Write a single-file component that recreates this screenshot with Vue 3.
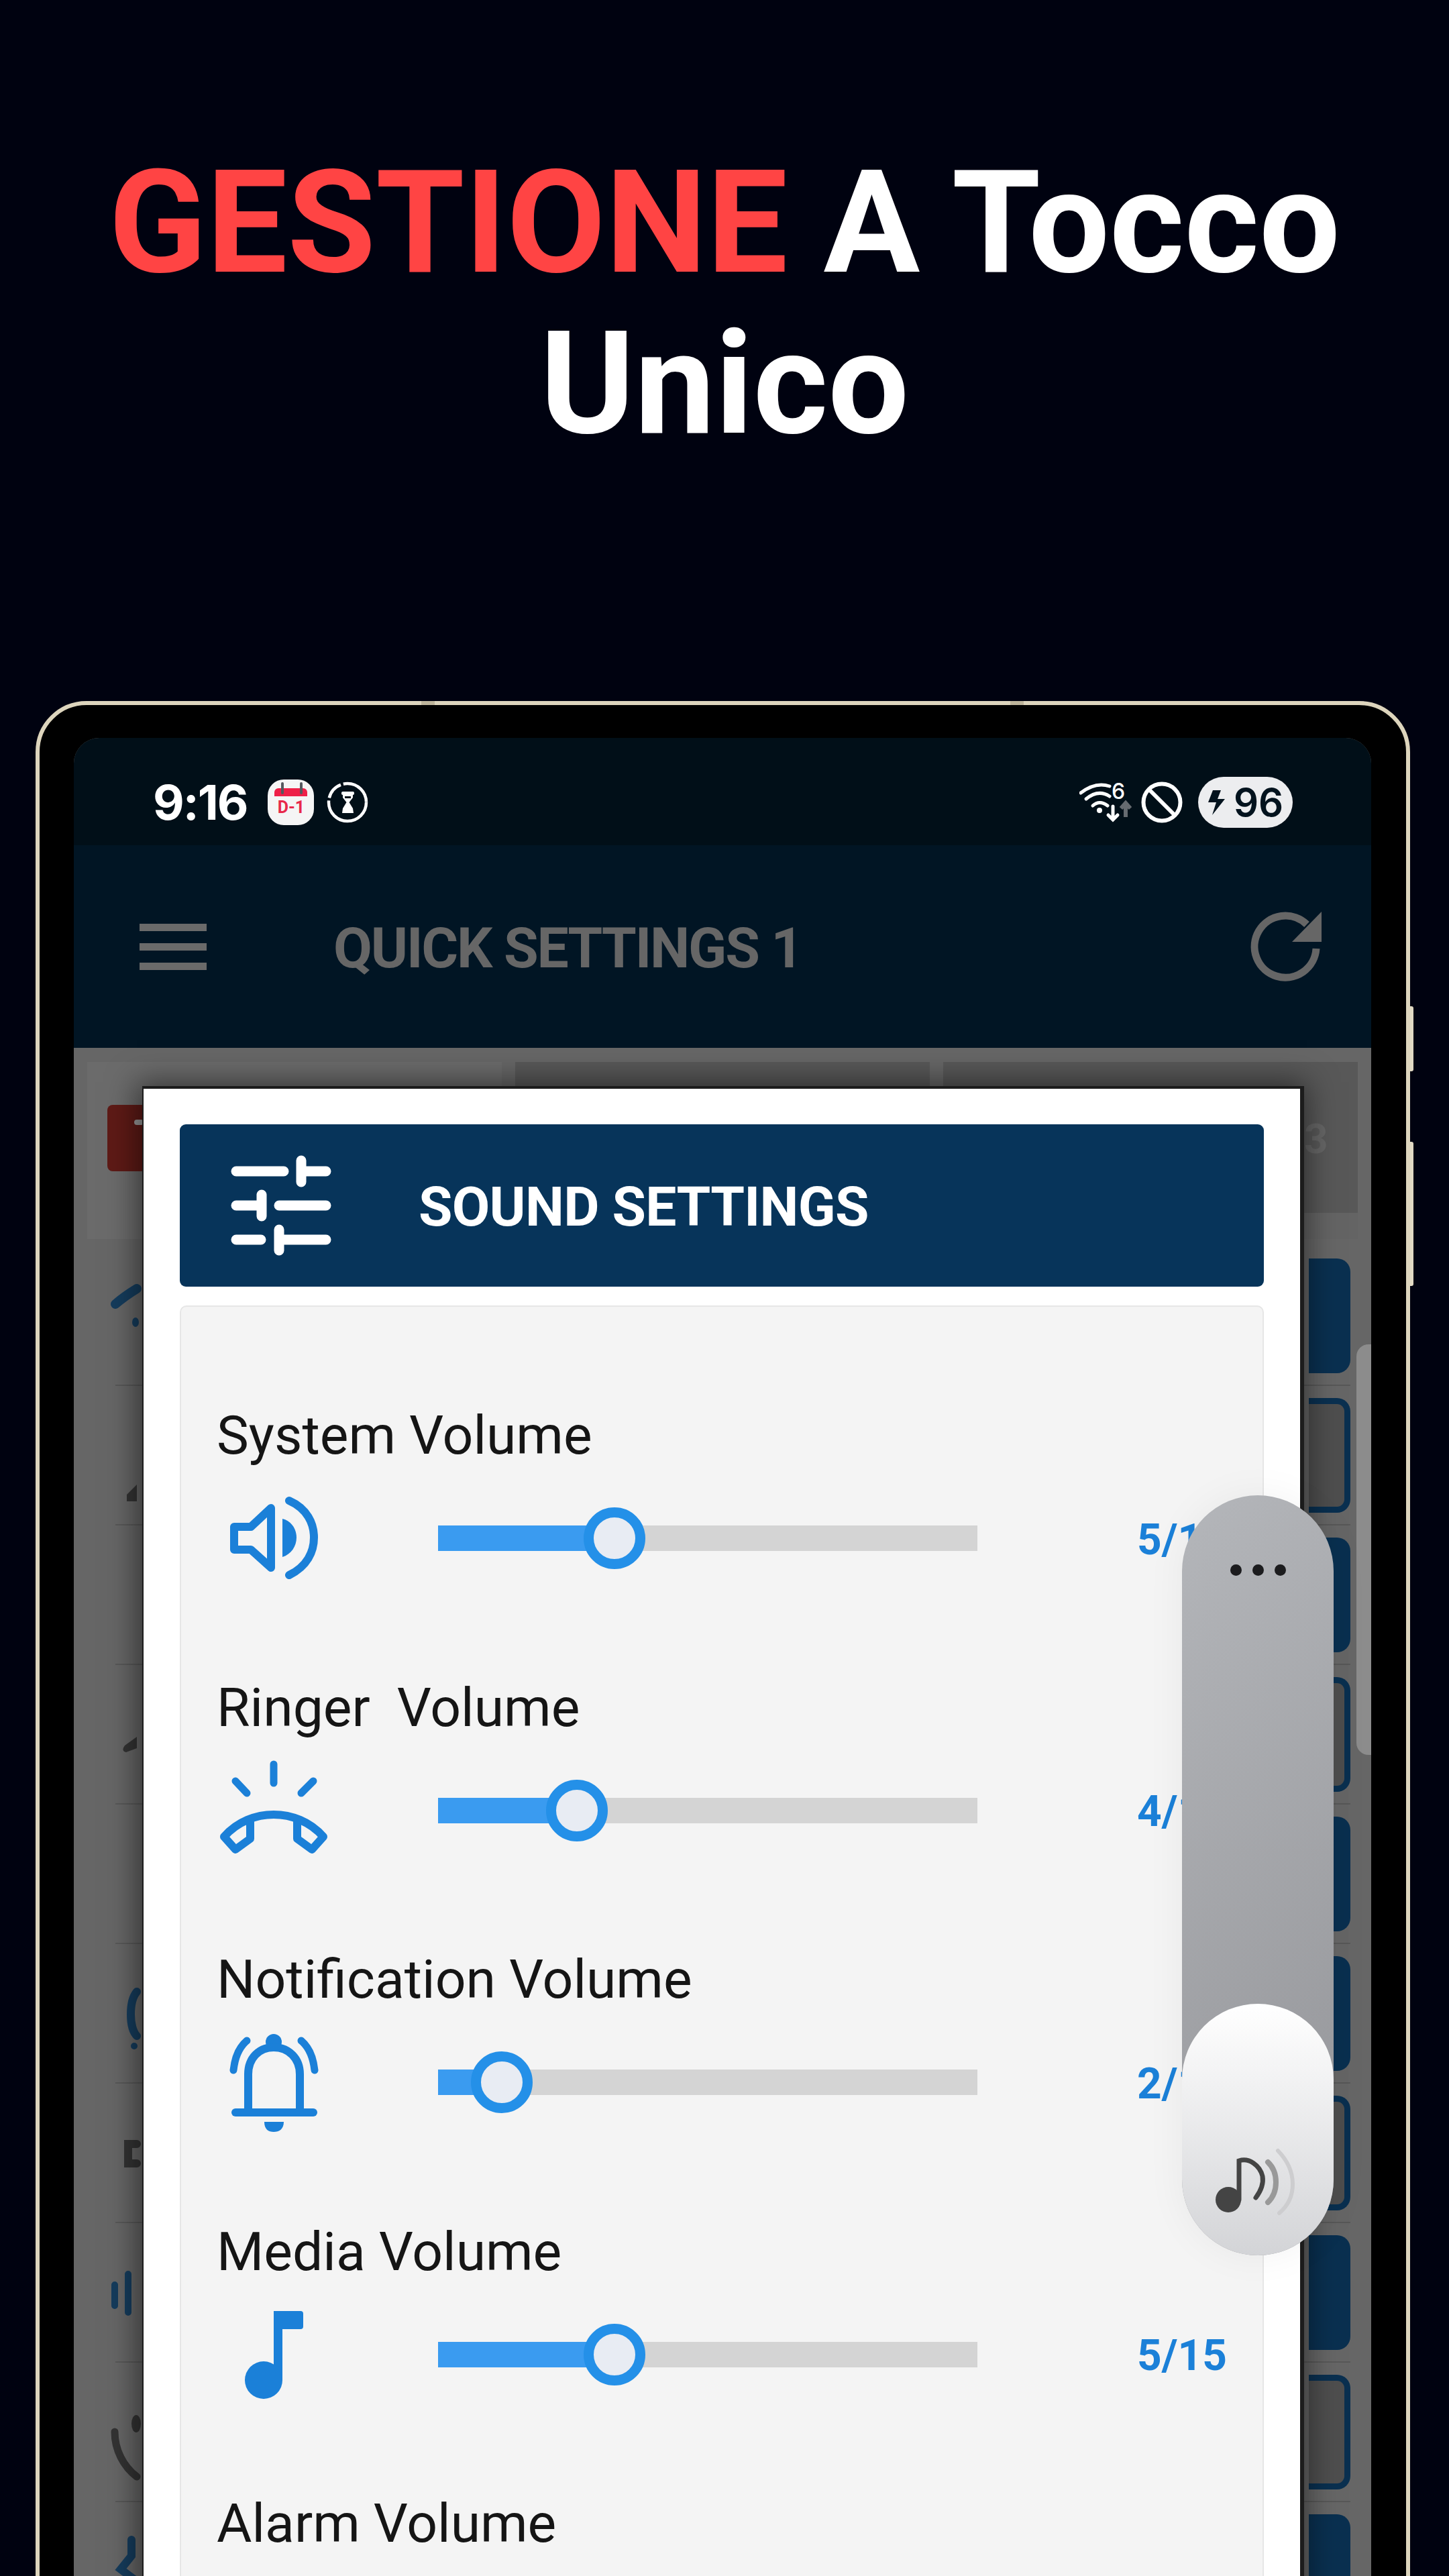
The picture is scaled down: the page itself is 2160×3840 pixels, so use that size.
<template>
  <div class="page">
    <h1 class="headline"><span class="red">GESTIONE</span> A Tocco<br />Unico</h1>

    <div class="device">
      <i class="side-btn one"></i>
      <i class="side-btn two"></i>
      <i class="seam top-a"></i>
      <i class="seam top-b"></i>

      <div class="screen">
        <div class="status-bar">
          <span class="clock">9:16</span>
          <svg class="calendar" viewBox="0 0 69 68">
            <rect x="0" y="0" width="69" height="68" rx="24" fill="#f5f5f5" />
            <path d="M10 19a6 6 0 0 1 6-6h37a6 6 0 0 1 6 6v6H10z" fill="#ee2048" />
            <path d="M22 6v14M50 6v14" stroke="#55585e" stroke-width="4" stroke-linecap="round" />
            <text x="35" y="50" text-anchor="middle" class="cal-text">D-1</text>
          </svg>
          <svg class="timer" viewBox="0 0 64 66">
            <circle cx="32" cy="33" r="28" fill="none" stroke="#fff" stroke-width="4.500" stroke-dasharray="90.500 4 27 4 50" />
            <rect x="23" y="17" width="19" height="5" rx="2" fill="#fff" />
            <path d="M25 21h15v5l-5.500 7 5.500 9 1 7H24l1-7 5.500-9-5.500-7z" fill="#fff" />
            <rect x="28" y="24" width="9" height="3" fill="#010f18" />
          </svg>

          <div class="status-right">
            <svg class="wifi" viewBox="0 -12 80 88">
              <g fill="none" stroke="#fff" stroke-width="5" stroke-linecap="round">
                <path d="M20 37q10-9 22 0" />
                <path d="M10 27q18-15 35-4" />
                <path d="M2 18q22-17 43-10" />
                <path d="M50 38v19M43 51l7 7 7-7" />
              </g>
              <path d="M69 54V34M62 41l7-8 7 8" fill="none" stroke="#666b70" stroke-width="6" />
              <circle cx="30" cy="44" r="4" fill="#fff" />
              <text x="48" y="27" class="wifi-six">6</text>
            </svg>
            <svg class="ban" viewBox="0 0 62 62">
              <circle cx="31" cy="31" r="27.500" fill="none" stroke="#fff" stroke-width="6" />
              <path d="M12 12l38 38" stroke="#fff" stroke-width="6" />
            </svg>
            <div class="battery">
              <svg class="bolt" viewBox="0 0 27 37"><path d="M8 0h12l-5 13h11L7 37l6-19H1z" fill="#03131e" /></svg>
              <span>96</span>
            </div>
          </div>
        </div>

        <div class="app-bar">
          <div class="burger"><i></i><i></i><i></i></div>
          <span class="app-title">QUICK SETTINGS 1</span>
          <svg class="refresh" viewBox="0 0 115 115">
            <path d="M88 24A46 46 0 1 0 102 60" fill="none" stroke="#666" stroke-width="11" />
            <path d="M110 5v45H66z" fill="#666" />
          </svg>
        </div>

        <div class="content">
          <div class="tiles">
            <div class="tile first">
              <div class="red-box"><i></i></div>
            </div>
            <div class="tile dark"></div>
            <div class="tile dark"><span class="tile-num">3</span></div>
          </div>

          <div class="list">
            <div v-for="(row, i) in listRows" :key="i" class="list-row">
              <svg class="row-icon" viewBox="0 0 40 206" v-html="row.icon"></svg>
              <div class="row-card" :class="{ outline: row.outline }"></div>
            </div>
          </div>
        </div>

        <div class="scrollbar"></div>

        <div class="dialog">
          <div class="dialog-head">
            <svg class="tune" viewBox="0 0 150 150" fill="none" stroke="#fff" stroke-width="15" stroke-linecap="round">
              <path d="M8 24h71M105 24h37M105 8v32" />
              <path d="M8 75h38M72 75h70M46 59v32" />
              <path d="M8 126h37M72 126h70M72 111v31" />
            </svg>
            <span class="head-title">SOUND SETTINGS</span>
          </div>

          <div class="volumes">
            <div v-for="v in volumes" :key="v.label" class="volume">
              <div class="volume-label">{{ v.label }}</div>
              <div v-if="v.icon" class="volume-row">
                <svg class="volume-icon" viewBox="0 0 170 160" v-html="v.icon"></svg>
                <div class="track">
                  <div class="fill" :style="{ width: thumbAt(v.value) + 'px' }"></div>
                  <div class="thumb" :style="{ left: thumbAt(v.value) + 'px' }"></div>
                </div>
                <span class="volume-value">{{ v.value }}/15</span>
              </div>
            </div>
          </div>
        </div>

        <div class="float-panel">
          <div class="dots"><i></i><i></i><i></i></div>
          <div class="knob">
            <svg class="knob-icon" viewBox="0 0 140 110">
              <circle cx="31" cy="83" r="19" fill="#444" />
              <path d="M47 83V25c15-5 31 7 35 23 2 12-4 24-10 32" fill="none" stroke="#444" stroke-width="7" stroke-linecap="round" />
              <path d="M90 27c16 15 16 45 0 60" fill="none" stroke="#999" stroke-width="8" stroke-linecap="round" />
              <path d="M105 10c29 30 29 70 2 93" fill="none" stroke="#cdcdcf" stroke-width="6" stroke-linecap="round" />
            </svg>
          </div>
        </div>
      </div>
    </div>
  </div>
</template>

<script setup>
const thumbAt = (value) => value * 56 - 17;

const blue = 'stroke="#153c5c" fill="none" stroke-linecap="round"';
const dark = 'stroke="#333" fill="none" stroke-linecap="round"';

// what sticks out left of the dialog, row by row
const listRows = [
  { icon: `<path d="M0 86Q14 74 32 63" stroke-width="14" ${blue}/><ellipse cx="30" cy="113" rx="5" ry="7" fill="#153c5c"/>` },
  { outline: true, icon: `<path d="M32 147L17 162V172H32Z" fill="#333"/>` },
  { icon: "" },
  { outline: true, icon: `<path d="M32 107L14 120Q8 128 16 130L32 124Z" fill="#333"/>` },
  { icon: "" },
  { icon: `<path d="M32 71C20 85 20 125 32 137" stroke-width="12" ${blue}/><circle cx="28" cy="152" r="5" fill="#153c5c"/>` },
  { outline: true, icon: `<path d="M32 90H19V119H32" stroke-width="12" ${dark}/>` },
  { icon: `<path d="M-1 92V123M19 76V133" stroke-width="10" ${blue}/>` },
  { outline: true, icon: `<path d="M-1 103C-1 130 12 155 32 170" stroke-width="11" ${dark}/><ellipse cx="31" cy="91" rx="7" ry="13" fill="#333"/>` },
  { icon: `<path d="M24 56V80L8 100L32 118" stroke-width="12" ${blue}/>` },
];

const iconStroke = 'fill="none" stroke="#1b80d8" stroke-linecap="round" stroke-linejoin="round"';

const volumes = [
  {
    label: "System Volume",
    value: 5,
    icon: `<path d="M29 63H54L84 35V124L54 97H29Z" stroke-width="12" ${iconStroke}/>
      <path d="M101 51C114 54 122 66 122 79C122 92 114 104 101 108Z" fill="#1b80d8"/>
      <path d="M111 24C138 36 148 58 148 79C148 100 138 122 111 135" stroke-width="12" ${iconStroke}/>`,
  },
  {
    label: "Ringer  Volume",
    value: 4,
    icon: `<path d="M88 11V39M31 36L48 54M147 36L129 54" stroke-width="11" ${iconStroke}/>
      <path d="M14 119C34 96 62 86 88 86C114 86 142 96 162 119L145 138L123 122V95M53 95V122L31 138L14 119" stroke-width="12" ${iconStroke}/>`,
  },
  {
    label: "Notification Volume",
    value: 2,
    icon: `<circle cx="88" cy="20" r="12" fill="#1b80d8"/>
      <path d="M50 121V68C50 44 66 28 88 28C110 28 127 44 127 68V121" stroke-width="12" ${iconStroke}/>
      <path d="M31 125H147" stroke-width="12" ${iconStroke}/>
      <path d="M74 139H103C103 150 96 154 88 154C80 154 74 150 74 139Z" fill="#1b80d8"/>
      <path d="M48 18C36 28 30 44 28 62M129 18C141 28 147 44 149 62" stroke-width="11" ${iconStroke}/>`,
  },
  {
    label: "Media Volume",
    value: 5,
    icon: `<circle cx="73" cy="118" r="28" fill="#1b80d8"/>
      <rect x="88" y="15" width="13" height="103" fill="#1b80d8"/>
      <rect x="88" y="15" width="44" height="27" rx="4" fill="#1b80d8"/>`,
  },
  { label: "Alarm Volume", value: 5, icon: "" },
];
</script>

<style>
html,
body {
  margin: 0;
  background: #000210;
}
</style>

<style scoped>
.page {
  position: relative;
  width: 2160px;
  height: 3840px;
  overflow: hidden;
  background: #000210;
  font-family: Roboto, "Liberation Sans", sans-serif;
}

.headline {
  margin: 0;
  padding-top: 212px;
  font-size: 214px;
  line-height: 240px;
  font-weight: 700;
  text-align: center;
  color: #fff;
}

.red {
  color: #ff4444;
}

.device {
  position: relative;
  box-sizing: border-box;
  width: 2049px;
  height: 2900px;
  margin: 353px 0 0 53px;
  padding: 49px 52px 0 51px;
  border: 6px solid #ddd5bd;
  border-radius: 76px;
  background: #000;
}

.side-btn {
  position: absolute;
  right: -11px;
  width: 5px;
  background: #e2dac4;
  border-radius: 0 3px 3px 0;
}

.side-btn.one {
  top: 449px;
  height: 97px;
}

.side-btn.two {
  top: 651px;
  height: 215px;
}

.seam {
  position: absolute;
  top: -6px;
  width: 20px;
  height: 6px;
  background: #bdb49b;
}

.seam.top-a {
  left: 569px;
}

.seam.top-b {
  left: 1447px;
}

.screen {
  position: relative;
  height: 2900px;
  overflow: hidden;
  border-radius: 38px 38px 0 0;
  background: #666;
}

.status-bar {
  display: flex;
  align-items: center;
  box-sizing: border-box;
  height: 160px;
  padding: 32px 117px 0 118px;
  background: #010f18;
  color: #fff;
}

.clock {
  font-family: Inter, sans-serif;
  font-size: 72px;
  font-weight: 700;
  letter-spacing: -2px;
  line-height: 1;
}

.calendar {
  width: 69px;
  height: 68px;
  margin-left: 30px;
}

.cal-text {
  font-family: Roboto, sans-serif;
  font-size: 25px;
  font-weight: 700;
  fill: #e8284a;
}

.timer {
  width: 64px;
  height: 66px;
  margin-left: 18px;
}

.status-right {
  display: flex;
  align-items: center;
  margin-left: auto;
}

.wifi {
  width: 80px;
  height: 88px;
  margin: 0;
}

.wifi-six {
  font-family: Inter, sans-serif;
  font-size: 32px;
  font-weight: 500;
  fill: #fff;
}

.ban {
  width: 62px;
  height: 62px;
  margin-left: 12px;
}

.battery {
  display: flex;
  align-items: center;
  box-sizing: border-box;
  width: 141px;
  height: 76px;
  margin-left: 23px;
  padding-left: 14px;
  border-radius: 38px;
  background: #ecedef;
  color: #03131e;
  font-family: Inter, sans-serif;
  font-size: 58px;
  font-weight: 600;
}

.bolt {
  width: 27px;
  height: 37px;
  margin-right: 12px;
}

.app-bar {
  display: flex;
  align-items: center;
  height: 302px;
  padding: 0 69px 0 98px;
  background: #011524;
}

.burger {
  display: flex;
  flex-direction: column;
  gap: 18px;
  width: 100px;
}

.burger i {
  display: block;
  height: 11px;
  background: #6a6a6a;
}

.app-title {
  margin: 4px 0 0 189px;
  color: #666;
  font-size: 84px;
  font-weight: 700;
  letter-spacing: -2.200px;
}

.refresh {
  width: 115px;
  height: 115px;
  margin-left: auto;
}

.content {
  padding: 21px 20px 0 20px;
}

.tiles {
  display: flex;
  gap: 20px;
  height: 264px;
}

.tile {
  position: relative;
  width: 620px;
}

.tile.first {
  background: #6b6b6b;
}

.tile.dark {
  background: linear-gradient(#585858 225px, #646464 225px);
}

.red-box {
  position: absolute;
  top: 64px;
  left: 30px;
  width: 120px;
  height: 99px;
  border-radius: 8px;
  background: #5e1a16;
}

.red-box i {
  position: absolute;
  top: 22px;
  left: 40px;
  width: 14px;
  height: 8px;
  border-radius: 4px;
  background: #999;
}

.tile-num {
  position: absolute;
  top: 78px;
  left: 538px;
  color: #666;
  font-size: 62px;
  font-weight: 700;
}

.list {
  margin: 11px 11px 0 42px;
}

.list-row {
  display: flex;
  align-items: center;
  justify-content: space-between;
  box-sizing: border-box;
  height: 208px;
  border-bottom: 2px solid #585858;
}

.row-icon {
  width: 40px;
  height: 206px;
  overflow: visible;
}

.row-card {
  box-sizing: border-box;
  width: 62px;
  height: 171px;
  border-radius: 0 20px 20px 0;
  background: #0a3050;
}

.row-card.outline {
  border: 9px solid #0a3050;
  border-left: 0;
  background: #4e4e4e;
}

.scrollbar {
  position: absolute;
  top: 904px;
  right: 0;
  width: 22px;
  height: 612px;
  border-radius: 18px 0 0 18px;
  background: #8c8c8c;
}

.dialog {
  position: absolute;
  top: 523px;
  left: 104px;
  box-sizing: border-box;
  width: 1724px;
  height: 2400px;
  padding: 53px 54px 0;
  background: #fff;
  box-shadow: 2px 0 0 4px #1c1c1c, 0 0 42px 10px rgba(0, 0, 0, 0.5);
}

.dialog-head {
  display: flex;
  align-items: center;
  height: 242px;
  border-radius: 9px;
  background: #07345a;
  color: #fff;
  font-size: 82px;
  font-weight: 700;
  letter-spacing: -0.700px;
}

.head-title {
  padding-top: 4px;
}

.tune {
  width: 150px;
  height: 150px;
  margin: 0 130px 0 76px;
  flex: none;
}

.volumes {
  box-sizing: border-box;
  height: 2100px;
  margin-top: 28px;
  padding: 142px 53px 0 50px;
  border: 2px solid #e6e6e6;
  border-radius: 10px;
  background: #f4f4f4;
}

.volume {
  height: 405.500px;
}

.volume-label {
  height: 100px;
  margin-bottom: 23px;
  padding-left: 3px;
  color: #151515;
  font-size: 80.500px;
  line-height: 100px;
  white-space: pre;
}

.volume-row {
  display: flex;
  align-items: center;
  height: 160px;
}

.volume-icon {
  width: 170px;
  height: 160px;
  flex: none;
  margin-right: 163px;
}

.track {
  position: relative;
  width: 804px;
  height: 38px;
  background: #d4d4d4;
}

.fill {
  height: 100%;
  background: #3a9bf0;
}

.thumb {
  position: absolute;
  top: 19px;
  box-sizing: border-box;
  width: 92px;
  height: 92px;
  margin: -46px 0 0 -46px;
  border: 15px solid #2490e8;
  border-radius: 50%;
  background: #e8ecf3;
}

.volume-value {
  margin: 4px 0 0 auto;
  color: #1b80d8;
  font-size: 64px;
  font-weight: 700;
}

.float-panel {
  position: absolute;
  top: 1129px;
  left: 1652px;
  width: 226px;
  height: 1133px;
  border-radius: 113px;
  background: linear-gradient(135deg, #b4b6ba, #939498);
  box-shadow: 0 0 60px rgba(0, 0, 0, 0.05);
}

.dots {
  display: flex;
  justify-content: center;
  gap: 16px;
  padding-top: 103px;
}

.dots i {
  width: 17px;
  height: 17px;
  border-radius: 50%;
  background: #1c1c1e;
}

.knob {
  position: absolute;
  right: 0;
  bottom: 0;
  left: 0;
  height: 375px;
  border-radius: 113px;
  background: linear-gradient(#fff, #d3d4d7);
}

.knob-icon {
  position: absolute;
  top: 209px;
  left: 38px;
  width: 140px;
  height: 110px;
}
</style>
